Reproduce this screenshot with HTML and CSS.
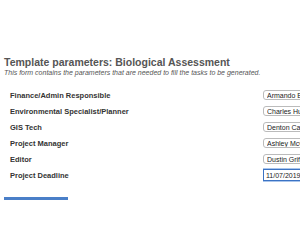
FILE: index.html
```html
<!DOCTYPE html>
<html lang="en">
<head>
  <meta charset="UTF-8">
  <meta name="viewport" content="width=device-width, initial-scale=1.0">
  <title>Template parameters</title>
  <link rel="stylesheet" href="styles.css">
</head>
<body>
  <div class="page">
    <h1 class="title">Template parameters: Biological Assessment</h1>
    <p class="subtitle">This form contains the parameters that are needed to fill the tasks to be generated.</p>
    <form class="params">
      <label class="row">
        <span class="name">Finance/Admin Responsible</span>
        <span class="clip"><input class="field" type="text" value="Armando Bustamante"></span>
      </label>
      <label class="row">
        <span class="name">Environmental Specialist/Planner</span>
        <span class="clip"><input class="field" type="text" value="Charles Hudson"></span>
      </label>
      <label class="row">
        <span class="name">GIS Tech</span>
        <span class="clip"><input class="field" type="text" value="Denton Carter"></span>
      </label>
      <label class="row">
        <span class="name">Project Manager</span>
        <span class="clip"><input class="field" type="text" value="Ashley McGuire"></span>
      </label>
      <label class="row">
        <span class="name">Editor</span>
        <span class="clip"><input class="field" type="text" value="Dustin Griffin"></span>
      </label>
      <label class="row">
        <span class="name">Project Deadline</span>
        <span class="clip"><input class="field date" type="text" value="11/07/2019"></span>
      </label>
    </form>
    <div class="submit"></div>
  </div>
</body>
</html>
```

FILE: styles.css
```css
* {
  margin: 0;
  padding: 0;
  box-sizing: border-box;
}

body {
  font-family: "Liberation Sans", Arial, sans-serif;
  background: #fff;
  overflow: hidden;
}

.page {
  width: 300px;
  padding: 56px 0 0 4px;
}

.title {
  font-size: 10.5px;
  line-height: 12px;
  font-weight: bold;
  color: #555;
}

.subtitle {
  font-size: 7px;
  line-height: 9px;
  font-style: italic;
  color: #555;
}

.params {
  display: flex;
  flex-direction: column;
  margin-top: 10px;
  padding-left: 6px;
}

.row {
  display: grid;
  grid-template-columns: 253px 37px;
  align-items: center;
  height: 16px;
}

.name {
  font-size: 7.5px;
  font-weight: bold;
  color: #333;
}

.clip {
  display: flex;
  align-items: center;
  width: 37px;
  height: 16px;
  overflow: hidden;
}

.field {
  flex: none;
  width: 70px;
  height: 10px;
  font-family: "Liberation Sans", Arial, sans-serif;
  font-size: 7px;
  color: #222;
  padding: 0 3px;
  border: 1px solid #bbb;
  border-radius: 3px;
  outline: none;
  background: #fff;
}

.field.date {
  height: 12px;
  padding: 0 2px;
  border: 1px solid #3b73c4;
  border-radius: 0;
  box-shadow: 0 0 0 1px #a9c5ec;
}

.submit {
  margin-top: 14px;
  width: 64px;
  height: 3px;
  background: #4a7fc8;
}
```
